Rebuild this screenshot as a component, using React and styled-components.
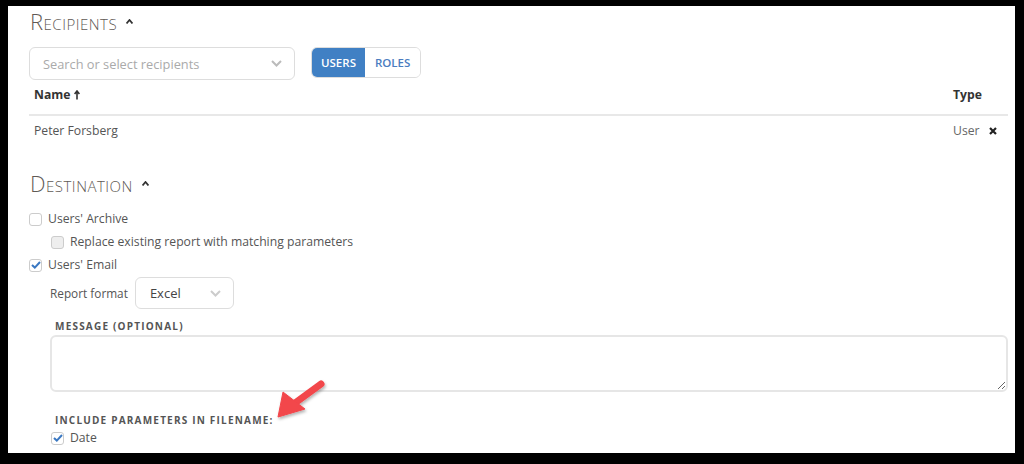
import React from 'react';
import styled, { createGlobalStyle } from 'styled-components';

const GlobalStyle = createGlobalStyle`
    html, body {
        margin: 0;
        padding: 0;
        background: #000;
    }
    body {
        font-family: "Open Sans", "Liberation Sans", sans-serif;
        color: #555;
        font-size: 12.2px;
    }
`;

const Panel = styled.div`
    position: relative;
    margin: 8px 9px 0 8px;
    height: 447px;
    background: #fff;
    padding: 0 7px 0 21px;
    box-sizing: border-box;
`;

const Heading = styled.h2`
    margin: ${props => props.top || 0}px 0 0 1px;
    font-size: 22px;
    line-height: 30px;
    font-weight: 300;
    font-variant: small-caps;
    letter-spacing: 0.5px;
    color: #5f5a55;
    display: flex;
    align-items: center;
    gap: 9px;
`;

const SearchRow = styled.div`
    display: flex;
    align-items: flex-start;
    gap: 16px;
    margin-top: 11px;
`;

const SearchBox = styled.div`
    width: 266px;
    height: 33px;
    box-sizing: border-box;
    border: 1px solid #ddd;
    border-radius: 6px;
    display: flex;
    align-items: center;
    justify-content: space-between;
    padding: 0 12px 0 13px;
    color: #aaa;
    font-size: 12.8px;
`;

const Toggle = styled.div`
    display: flex;
    height: 31px;
    box-sizing: border-box;
    border: 1px solid #ddd;
    border-radius: 6px;
    overflow: hidden;
`;

const ToggleButton = styled.div`
    display: flex;
    align-items: center;
    padding: 0 ${props => props.wide}px;
    font-size: 11.5px;
    font-weight: 600;
    background: ${props => props.active ? '#4080c4' : '#fff'};
    color: ${props => props.active ? '#fff' : '#4a7cc0'};
`;

const TableRow = styled.div`
    display: flex;
    align-items: center;
    line-height: 20px;
    padding: ${props => props.head ? '5px 0 9px 5px' : '5px 0 0 5px'};
    border-bottom: ${props => props.head ? '2px solid #e8e8e8' : 'none'};
    font-weight: ${props => props.head ? 700 : 400};
    color: ${props => props.head ? '#333' : '#555'};
`;

const NameCell = styled.div`
    flex: 1;
    display: flex;
    align-items: center;
    gap: 4px;
`;

const TypeCell = styled.div`
    width: 55px;
    display: flex;
    align-items: center;
    gap: 9px;
    color: ${props => props.head ? '#333' : '#666'};
`;

const CheckList = styled.div`
    display: flex;
    flex-direction: column;
    gap: 3px;
    margin-top: ${props => props.top}px;
`;

const CheckRow = styled.label`
    display: flex;
    align-items: center;
    gap: 6px;
    line-height: 20px;
    margin-left: ${props => props.indent || 0}px;
    color: #555;
`;

const Box = styled.span`
    width: 13px;
    height: 13px;
    box-sizing: border-box;
    border: 1px solid #ccc;
    border-radius: 3px;
    background: ${props => props.disabled ? '#eee' : '#fff'};
    display: flex;
    align-items: center;
    justify-content: center;
`;

const FormatRow = styled.div`
    display: flex;
    align-items: center;
    gap: 7px;
    margin: 2px 0 0 21px;
    font-size: 11.8px;
`;

const FormatSelect = styled.div`
    width: 99px;
    height: 32px;
    box-sizing: border-box;
    border: 1px solid #ddd;
    border-radius: 6px;
    display: flex;
    align-items: center;
    justify-content: space-between;
    padding: 0 12px 0 14px;
    color: #444;
    font-size: 13px;
`;

const FieldLabel = styled.div`
    margin: ${props => props.top}px 0 0 26px;
    font-size: 10px;
    line-height: 14px;
    font-weight: 700;
    letter-spacing: 1.2px;
    color: #555;
`;

const MessageArea = styled.textarea`
    display: block;
    margin: 2px 0 0 21px;
    width: calc(100% - 21px);
    height: 57px;
    box-sizing: border-box;
    border: 2px solid #e6e6e6;
    border-radius: 6px;
    resize: vertical;
    font-family: inherit;
`;

const Arrow = styled.svg`
    position: absolute;
    left: 255px;
    top: 365px;
    overflow: visible;
`;

const Chevron = ({ color = '#bbb' }) => (
    <svg width="11" height="7" viewBox="0 0 11 7">
        <path d="M1 1 L5.5 5.5 L10 1" fill="none" stroke={color} strokeWidth="2" />
    </svg>
);

const Caret = () => (
    <svg width="7" height="5" viewBox="0 0 7 5">
        <path d="M0.5 4.5 L3.5 1 L6.5 4.5" fill="none" stroke="#333" strokeWidth="1.8" />
    </svg>
);

const SortUp = () => (
    <svg width="6" height="10" viewBox="0 0 6 10">
        <path d="M3 9.5 V1.5 M0.6 4 L3 1 L5.4 4" fill="none" stroke="#333" strokeWidth="1.6" />
    </svg>
);

const Remove = () => (
    <svg width="8" height="8" viewBox="0 0 8 8">
        <path d="M1 1 L7 7 M7 1 L1 7" stroke="#222" strokeWidth="2.2" />
    </svg>
);

const Check = () => (
    <svg width="10" height="8" viewBox="0 0 10 8">
        <path d="M1 4 L3.8 6.6 L9 1" fill="none" stroke="#3a78c2" strokeWidth="2" />
    </svg>
);

const Checkbox = ({ label, checked, disabled, indent }) => (
    <CheckRow indent={indent}>
        <Box disabled={disabled}>{checked && <Check />}</Box>
        {label}
    </CheckRow>
);

const App = () => {
    return (
        <>
            <GlobalStyle />
            <Panel>
                <Heading top={-2}>Recipients <Caret /></Heading>
                <SearchRow>
                    <SearchBox>
                        Search or select recipients
                        <Chevron />
                    </SearchBox>
                    <Toggle>
                        <ToggleButton active wide={9}>USERS</ToggleButton>
                        <ToggleButton wide={10}>ROLES</ToggleButton>
                    </Toggle>
                </SearchRow>
                <TableRow head>
                    <NameCell>Name <SortUp /></NameCell>
                    <TypeCell head>Type</TypeCell>
                </TableRow>
                <TableRow>
                    <NameCell>Peter Forsberg</NameCell>
                    <TypeCell>User <Remove /></TypeCell>
                </TableRow>
                <Heading top={27}>Destination <Caret /></Heading>
                <CheckList top={11}>
                    <Checkbox label="Users' Archive" />
                    <Checkbox label="Replace existing report with matching parameters" disabled indent={22} />
                    <Checkbox label="Users' Email" checked />
                </CheckList>
                <FormatRow>
                    Report format
                    <FormatSelect>
                        Excel
                        <Chevron color="#ccc" />
                    </FormatSelect>
                </FormatRow>
                <FieldLabel top={10}>MESSAGE (OPTIONAL)</FieldLabel>
                <MessageArea />
                <FieldLabel top={21}>INCLUDE PARAMETERS IN FILENAME:</FieldLabel>
                <CheckList top={1}>
                    <Checkbox label="Date" checked indent={22} />
                </CheckList>
                <Arrow width="70" height="55" viewBox="255 365 70 55">
                    <defs>
                        <filter id="sh" x="-30%" y="-30%" width="160%" height="160%">
                            <feDropShadow dx="1" dy="2" stdDeviation="1.5" floodColor="#000" floodOpacity="0.3" />
                        </filter>
                    </defs>
                    <g filter="url(#sh)" fill="#f2464b" stroke="#f2464b">
                        <line x1="313" y1="378" x2="287" y2="397" strokeWidth="7" strokeLinecap="round" />
                        <polygon points="270,411 275,386 297,403" strokeWidth="1" strokeLinejoin="round" />
                    </g>
                </Arrow>
            </Panel>
        </>
    );
};

export default App;
